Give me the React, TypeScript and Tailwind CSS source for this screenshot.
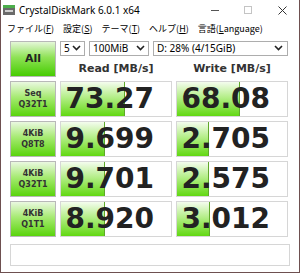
import React from "react";

const Chevron = () => (
  <svg width="9" height="6" viewBox="0 0 9 6" className="shrink-0">
    <path d="M1 1 L4.5 4.5 L8 1" fill="none" stroke="#222" strokeWidth="1.6" />
  </svg>
);

const Btn = ({ a, b }: { a: string; b: string }) => (
  <div className="h-[36px] border border-[#b8b8b8] bg-[linear-gradient(to_bottom,#eaf8e0_0%,#a6ea72_45%,#5ad40c_100%)] flex flex-col items-center justify-center text-[8px] leading-[11px] font-bold text-[#333] font-['DejaVu_Sans',sans-serif]">
    <span>{a}</span>
    <span>{b}</span>
  </div>
);

const Val = ({ v, w }: { v: string; w: number }) => (
  <div className="relative h-[36px] border border-[#d6d6d6] bg-white flex items-center justify-end pr-[17px] overflow-hidden">
    <div
      className="absolute left-0 top-0 bottom-0 border-r border-[#5fa82a] bg-[linear-gradient(to_bottom,#f4fcee_0%,#b4ee88_45%,#62d812_100%)]"
      style={{ width: w }}
    />
    <span className="relative text-[28px] leading-none font-bold text-[#222] font-['DejaVu_Sans',sans-serif]">
      {v}
    </span>
  </div>
);

const M = ({ t, k, rest }: { t: string; k: string; rest?: string }) => (
  <span>
    {t}(<span className="underline">{k}</span>
    {rest})
  </span>
);

export default function App() {
  const rows = [
    ["Seq", "Q32T1", "73.27", 64, "68.08", 63],
    ["4KiB", "Q8T8", "9.699", 44, "2.705", 32],
    ["4KiB", "Q32T1", "9.701", 44, "2.575", 32],
    ["4KiB", "Q1T1", "8.920", 44, "3.012", 33],
  ] as const;
  return (
    <div className="w-[300px] h-[273px] bg-white border-x border-b border-[#6e5050] flex flex-col overflow-hidden font-['Noto_Sans','Noto_Sans_CJK_JP',sans-serif] text-black">
      {/* title bar */}
      <div className="h-[20px] flex items-center shrink-0">
        <svg width="12" height="10" viewBox="0 0 12 10" className="ml-[2px]">
          <rect x="0" y="0" width="12" height="10" fill="#6a6a6a" />
          <rect x="0" y="0" width="12" height="3" fill="#4cae4c" />
          <rect x="2" y="5" width="8" height="2" fill="#cfcfcf" />
        </svg>
        <span className="ml-[4px] text-[10px] leading-none">CrystalDiskMark 6.0.1 x64</span>
        <div className="flex-1" />
        <svg width="8" height="8" viewBox="0 0 8 8" className="mr-[25px]">
          <line x1="0" y1="4.5" x2="8" y2="4.5" stroke="#555" strokeWidth="1" />
        </svg>
        <svg width="8" height="8" viewBox="0 0 8 8" className="mr-[26px]">
          <rect x="0.5" y="0.5" width="7" height="7" fill="none" stroke="#c4c4c4" strokeWidth="1" />
        </svg>
        <svg width="9" height="9" viewBox="0 0 9 9" className="mr-[12px]">
          <path d="M0.5 0.5 L8.5 8.5 M8.5 0.5 L0.5 8.5" stroke="#333" strokeWidth="1" />
        </svg>
      </div>
      {/* menu */}
      <div className="h-[17px] flex items-center shrink-0 pl-[6px] gap-[9px] text-[9px] leading-none font-['Noto_Sans_CJK_JP',sans-serif]">
        <M t="ファイル" k="F" />
        <M t="設定" k="S" />
        <M t="テーマ" k="T" />
        <M t="ヘルプ" k="H" />
        <M t="言語" k="L" rest="anguage" />
      </div>
      {/* client */}
      <div className="flex-1 pl-[9px] pt-[4px]">
        <div className="grid grid-cols-[46px_112px_112px] gap-x-[4px] gap-y-[4px]">
          <div className="h-[36px] border border-[#b8b8b8] bg-[linear-gradient(to_bottom,#e4f7d8_0%,#8fe256_45%,#46cc02_100%)] flex items-center justify-center text-[11px] font-bold text-[#222] font-['DejaVu_Sans',sans-serif]">
            All
          </div>
          <div className="col-span-2 h-[36px] flex flex-col">
            <div className="h-[16px] flex gap-[4px] text-[10px] leading-none">
              <div className="w-[25px] border border-[#adadad] bg-white flex items-center justify-between pl-[3px] pr-[3px]">
                <span>5</span>
                <Chevron />
              </div>
              <div className="w-[60px] border border-[#adadad] bg-white flex items-center justify-between pl-[3px] pr-[3px]">
                <span>100MiB</span>
                <Chevron />
              </div>
              <div className="flex-1 border border-[#adadad] bg-white flex items-center justify-between pl-[3px] pr-[4px]">
                <span>D: 28% (4/15GiB)</span>
                <Chevron />
              </div>
            </div>
            <div className="flex-1 grid grid-cols-[112px_112px] gap-x-[4px] text-[11px] font-bold text-[#333] font-['DejaVu_Sans',sans-serif]">
              <div className="flex items-center justify-center pt-[5px]">Read [MB/s]</div>
              <div className="flex items-center justify-center pt-[5px]">Write [MB/s]</div>
            </div>
          </div>
          {rows.map((r, i) => (
            <React.Fragment key={i}>
              <Btn a={r[0]} b={r[1]} />
              <Val v={r[2]} w={r[3]} />
              <Val v={r[4]} w={r[5]} />
            </React.Fragment>
          ))}
        </div>
        <div className="mt-[7px] w-[280px] h-[22px] border border-[#d6d6d6] bg-white" />
      </div>
    </div>
  );
}
